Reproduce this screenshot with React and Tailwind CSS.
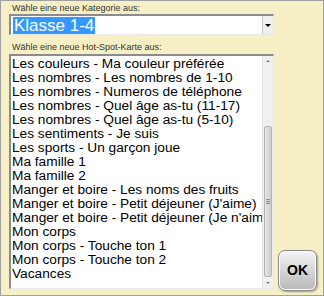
import React from 'react'

const items = [
  'Les couleurs - Ma couleur préférée',
  'Les nombres - Les nombres de 1-10',
  'Les nombres - Numeros de téléphone',
  'Les nombres - Quel âge as-tu (11-17)',
  'Les nombres - Quel âge as-tu (5-10)',
  'Les sentiments - Je suis',
  'Les sports - Un garçon joue',
  'Ma famille 1',
  'Ma famille 2',
  'Manger et boire - Les noms des fruits',
  "Manger et boire - Petit déjeuner (J'aime)",
  "Manger et boire - Petit déjeuner (Je n'aime pas)",
  'Mon corps',
  'Mon corps - Touche ton 1',
  'Mon corps - Touche ton 2',
  'Vacances',
]

// ─── Scrollbar ────────────────────────────────────────────────────────────────

function Scrollbar() {
  return (
    <div className="w-[11px] h-full flex flex-col bg-[#f0f0f0] border-l border-[#e4e4e4]">
      <div className="h-[10px] flex items-center justify-center">
        <div className="w-0 h-0 border-l-[2px] border-r-[2px] border-b-[2px] border-l-transparent border-r-transparent border-b-[#777]" />
      </div>
      <div className="flex-1 flex flex-col pt-[60px] pb-[1px]">
        <div className="flex-1 mx-[1px] rounded-[2px] bg-gradient-to-r from-[#e6e6e6] to-[#cfcfcf] border border-[#b4b4b4] flex items-center justify-center">
          <div className="flex flex-col gap-[1px]">
            <div className="w-[4px] h-px bg-[#8a8a8a]" />
            <div className="w-[4px] h-px bg-[#8a8a8a]" />
            <div className="w-[4px] h-px bg-[#8a8a8a]" />
          </div>
        </div>
      </div>
      <div className="h-[10px] flex items-center justify-center">
        <div className="w-0 h-0 border-l-[2px] border-r-[2px] border-t-[2px] border-l-transparent border-r-transparent border-t-[#777]" />
      </div>
    </div>
  )
}

// ─── Page ─────────────────────────────────────────────────────────────────────

export default function App() {
  return (
    <div
      className="w-[324px] h-[296px] border border-[#a0a0a0] bg-[#f7f0c6] flex pl-[8px] pt-[3px] overflow-hidden"
      style={{ fontFamily: '"Liberation Sans", Arial, sans-serif' }}
    >
      {/* Left column */}
      <div className="w-[265px] flex flex-col">
        <p className="text-[9px] leading-[9px] text-[#333] pl-[3px] h-[9px]">
          Wähle eine neue Kategorie aus:
        </p>

        {/* Category select */}
        <div className="mt-[1px] h-[21px] flex bg-white border-t-2 border-l-2 border-[#8c8c8c] border-r border-b border-r-[#e8e8e8] border-b-[#e8e8e8]">
          <div className="flex-1 flex items-center pl-[2px]">
            <span className="bg-[#3399ff] text-white text-[17px] leading-[17px] px-px">Klasse 1-4</span>
          </div>
          <div className="w-[11px] bg-[#f0f0f0] border-l border-[#c8c8c8] flex items-center justify-center">
            <div className="w-0 h-0 border-l-[3px] border-r-[3px] border-t-[3px] border-l-transparent border-r-transparent border-t-black" />
          </div>
        </div>

        <p className="mt-[8px] text-[9px] leading-[9px] text-[#333] pl-[3px] h-[9px]">
          Wähle eine neue Hot-Spot-Karte aus:
        </p>

        {/* Map list */}
        <div className="mt-[2px] h-[235px] flex bg-white border-t-2 border-l-2 border-[#8c8c8c] border-r border-b border-r-[#e8e8e8] border-b-[#e8e8e8]">
          <div className="flex-1 overflow-hidden pl-[1px] pt-[1px]">
            {items.map((item) => (
              <div key={item} className="text-[13.7px] leading-[14px] h-[14px] text-black whitespace-nowrap">
                {item}
              </div>
            ))}
          </div>
          <Scrollbar />
        </div>
      </div>

      {/* Right column */}
      <div className="flex-1 flex flex-col justify-end pb-[4px] pl-[4px]">
        <button
          type="button"
          className="w-[39px] h-[41px] rounded-[7px] border border-[#8a8a8a] bg-gradient-to-b from-[#f4f4f4] via-[#d6d6d6] to-[#b8b8b8] shadow-[inset_0_0_0_1px_#ffffff,1px_1px_2px_rgba(0,0,0,0.35)] flex items-center justify-center text-[14px] font-bold text-black"
        >
          OK
        </button>
      </div>
    </div>
  )
}
